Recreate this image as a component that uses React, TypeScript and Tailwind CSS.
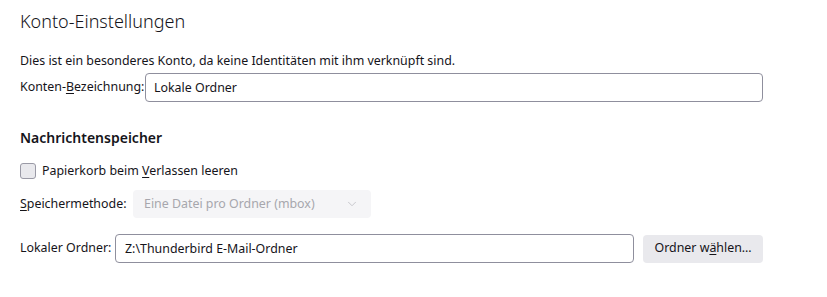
import { ChevronDown } from "lucide-react";

const font = { fontFamily: '"Noto Sans", "Open Sans", sans-serif' };

const Key = ({ children }: { children: string }) => <span className="underline underline-offset-2">{children}</span>;

export default function App() {
  return (
    <div className="w-[827px] h-[297px] bg-white text-[#15141a] text-[12.4px] pl-5 pr-16 overflow-hidden" style={font}>
      <h1 className="text-[18px] font-light leading-[28px] pt-[7px]">Konto-Einstellungen</h1>

      <p className="mt-[17px] leading-[18px]">Dies ist ein besonderes Konto, da keine Identitäten mit ihm verknüpft sind.</p>

      <div className="flex items-center mt-[3px]">
        <label className="w-[125px] shrink-0 whitespace-nowrap">
          Konten-<Key>B</Key>ezeichnung:
        </label>
        <input
          className="w-[619px] h-[29px] px-2 border border-[#8f8f9d] rounded-[4px] outline-none text-[12.4px]"
          defaultValue="Lokale Ordner"
        />
      </div>

      <h2 className="mt-[26px] text-[14px] font-semibold leading-[20px]">Nachrichtenspeicher</h2>

      <label className="flex items-center mt-[14px] h-[18px]">
        <span className="w-[16px] h-[16px] rounded-[3px] border border-[#9a9aa6] bg-[#e9e9ed]" />
        <span className="ml-[6px]">
          Papierkorb beim <Key>V</Key>erlassen leeren
        </span>
      </label>

      <div className="flex items-center mt-[10px]">
        <label className="w-[113px] shrink-0 whitespace-nowrap">
          <Key>S</Key>peichermethode:
        </label>
        <div className="w-[238px] h-[28px] rounded-[4px] bg-[#f5f5f7] flex items-center justify-between pl-[11px] pr-[12px] text-[#a7a7ad]">
          <span>Eine Datei pro Ordner (mbox)</span>
          <ChevronDown size={14} strokeWidth={1.3} className="text-[#b9b9bf]" />
        </div>
      </div>

      <div className="flex items-center mt-[16px]">
        <label className="w-[95px] shrink-0 whitespace-nowrap">Lokaler Ordner:</label>
        <input
          className="w-[520px] h-[29px] px-[9px] border border-[#8f8f9d] rounded-[4px] outline-none text-[12.4px]"
          defaultValue="Z:\Thunderbird E-Mail-Ordner"
        />
        <button className="ml-[9px] w-[120px] h-[28px] rounded-[4px] bg-[#e9e9ed] text-[12.4px]">
          Ordner w<Key>ä</Key>hlen…
        </button>
      </div>
    </div>
  );
}
